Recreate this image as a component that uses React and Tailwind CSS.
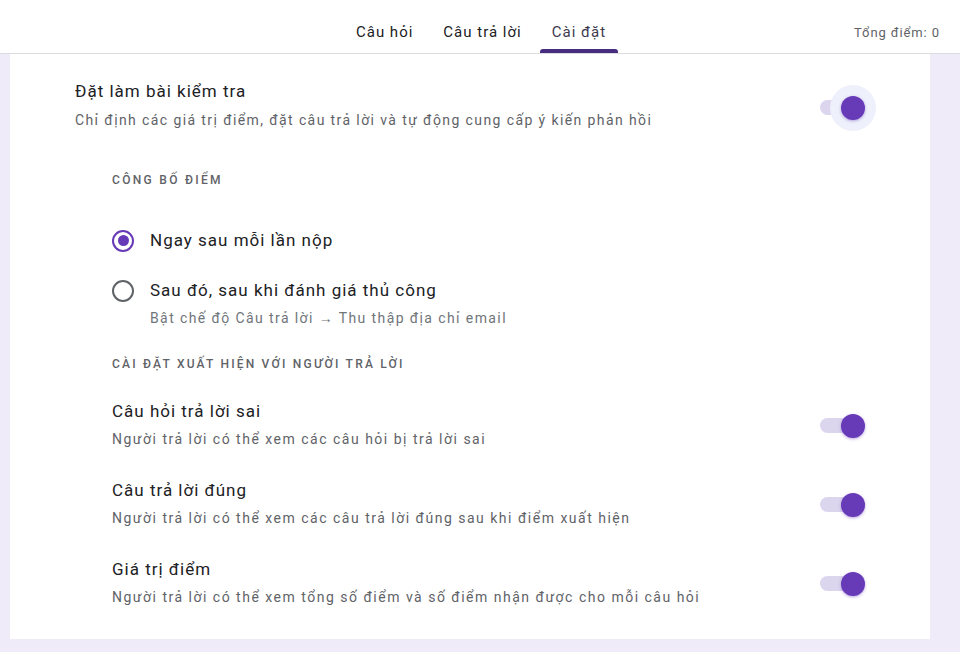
import React from 'react';

const Toggle = ({ halo }) => (
  <div className="relative w-[46px] h-[26px] flex items-center">
    <div className="absolute left-[0px] w-[40px] h-[15px] rounded-full bg-[#dcd5ee]" />
    {halo && <div className="absolute left-[10px] -top-[10px] w-[46px] h-[46px] rounded-full bg-[#eef0fb]" />}
    <div className="absolute left-[21px] w-[24px] h-[24px] rounded-full bg-[#673ab7] shadow-[0_1px_3px_rgba(103,58,183,0.45)]" />
  </div>
);

const Radio = ({ checked }) => (
  <div className={`w-[22px] h-[22px] rounded-full border-2 flex items-center justify-center ${checked ? 'border-[#673ab7]' : 'border-[#5f6368]'}`}>
    {checked && <div className="w-[11px] h-[11px] rounded-full bg-[#673ab7]" />}
  </div>
);

const Tab = ({ label, active }) => (
  <div className={`h-[53px] flex flex-col justify-end items-stretch ${active ? 'text-[#3d3a4e]' : 'text-[#202124]'}`}>
    <span className="block px-[12px] pb-[6px] whitespace-nowrap">{label}</span>
    <span className={`block w-full h-[4px] rounded-t-[3px] ${active ? 'bg-[#472c80]' : 'bg-transparent'}`} />
  </div>
);

const rows = [
  { title: 'Câu hỏi trả lời sai', desc: 'Người trả lời có thể xem các câu hỏi bị trả lời sai' },
  { title: 'Câu trả lời đúng', desc: 'Người trả lời có thể xem các câu trả lời đúng sau khi điểm xuất hiện' },
  { title: 'Giá trị điểm', desc: 'Người trả lời có thể xem tổng số điểm và số điểm nhận được cho mỗi câu hỏi' },
];

export default function App() {
  return (
    <div className="w-[960px] h-[652px] bg-[#f0ebf8] overflow-hidden flex flex-col" style={{ fontFamily: 'Roboto, "Noto Sans", sans-serif' }}>
      {/* Header */}
      <header className="h-[54px] bg-white border-b border-[#dadce0] flex items-end shrink-0">
        <div className="flex-1" />
        <nav className="flex gap-[6px] text-[15px] tracking-[1px] pl-[22px]">
          <Tab label="Câu hỏi" />
          <Tab label="Câu trả lời" />
          <Tab label="Cài đặt" active />
        </nav>
        <div className="flex-1 flex justify-end pr-[20px] pb-[11px] text-[13px] tracking-[0.9px] text-[#5f6368]">Tổng điểm: 0</div>
      </header>

      {/* Card */}
      <div className="flex pl-[10px] pr-[30px] pb-[13px] flex-1">
        <div className="flex-1 bg-white pl-[65px] pr-[64px] pt-[24px]">
          <div className="flex items-center justify-between">
            <div>
              <div className="text-[17px] text-[#202124] tracking-[1px] leading-[26px]">Đặt làm bài kiểm tra</div>
              <div className="text-[14px] text-[#5f6368] tracking-[1.4px] leading-[22px] mt-[5px]">Chỉ định các giá trị điểm, đặt câu trả lời và tự động cung cấp ý kiến phản hồi</div>
            </div>
            <div className="mt-[6px]"><Toggle halo /></div>
          </div>

          <div className="pl-[37px]">
            <div className="mt-[40px] text-[12px] font-medium tracking-[2.3px] text-[#5f6368] uppercase">Công bố điểm</div>

            <div className="mt-[39px] flex items-center gap-[16px]">
              <Radio checked />
              <div className="text-[17px] tracking-[1px] text-[#202124]">Ngay sau mỗi lần nộp</div>
            </div>

            <div className="mt-[23px] flex items-start gap-[16px]">
              <div className="mt-[3px]"><Radio /></div>
              <div>
                <div className="text-[17px] tracking-[1px] text-[#202124] leading-[26px]">Sau đó, sau khi đánh giá thủ công</div>
                <div className="text-[14px] tracking-[1.4px] text-[#70757a] leading-[20px] mt-[5px]">Bật chế độ Câu trả lời → Thu thập địa chỉ email</div>
              </div>
            </div>

            <div className="mt-[27px] text-[12px] font-medium tracking-[2.2px] text-[#5f6368] uppercase">Cài đặt xuất hiện với người trả lời</div>

            <div className="mt-[26px] flex flex-col gap-[29px]">
              {rows.map((r) => (
                <div key={r.title} className="flex items-center justify-between">
                  <div>
                    <div className="text-[17px] tracking-[1px] text-[#202124] leading-[24px]">{r.title}</div>
                    <div className="text-[14px] tracking-[1.5px] text-[#5f6368] leading-[20px] mt-[6px]">{r.desc}</div>
                  </div>
                  <div className="mt-[4px]"><Toggle /></div>
                </div>
              ))}
            </div>
          </div>
        </div>
      </div>
    </div>
  );
}
